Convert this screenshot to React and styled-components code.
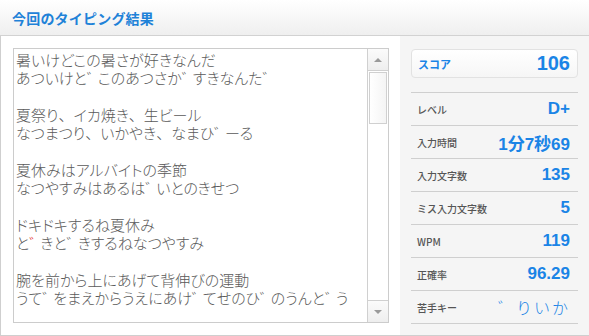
import React from 'react';
import styled, { createGlobalStyle } from 'styled-components';

const GlobalStyle = createGlobalStyle`
  html, body {
    margin: 0;
    padding: 0;
    background: #ffffff;
  }
  body {
    font-family: "Noto Sans CJK JP", "Liberation Sans", sans-serif;
  }
`;

// '*' marks a miss (shown red)
const lines = [
  '暑いけどこの暑さが好きなんだ',
  'あついけと゛このあつさか゛すきなんた゛',
  '',
  '夏祭り、イカ焼き、生ビール',
  'なつまつり、いかやき、なまひ゛ーる',
  '',
  '夏休みはアルバイトの季節',
  'なつやすみはあるは゛いとのきせつ',
  '',
  'ドキドキするね夏休み',
  'と*゛きと゛きするねなつやすみ',
  '',
  '腕を前から上にあげて背伸びの運動',
  'うて゛をまえからうえにあけ゛てせのひ゛のうんと゛う',
];

const stats = [
  { label: 'レベル', value: 'D+' },
  { label: '入力時間', value: '1分7秒69' },
  { label: '入力文字数', value: '135' },
  { label: 'ミス入力文字数', value: '5' },
  { label: 'WPM', value: '119' },
  { label: '正確率', value: '96.29' },
  { label: '苦手キー', value: '゛りいか', light: true },
];

const Page = styled.div`
  width: 589px;
  height: 336px;
  display: flex;
  flex-direction: column;
  box-sizing: border-box;
`;

const Header = styled.div`
  height: 35px;
  border-bottom: 1px solid #d2d2d2;
  background: linear-gradient(#ffffff, #efefef);
  display: flex;
  align-items: center;
  padding-left: 12px;
`;

const Title = styled.h1`
  margin: 0;
  font-size: 14px;
  font-weight: bold;
  color: #1f82d8;
  letter-spacing: 0.2px;
`;

const Body = styled.div`
  display: flex;
  height: 299px;
  border-bottom: 1px solid #cfcfcf;
`;

const LeftPane = styled.div`
  width: 400px;
  border-left: 1px solid #cfcfcf;
  background: #ffffff;
  box-sizing: border-box;
  padding: 12px 0 0 12px;
`;

const TextBox = styled.div`
  width: 376px;
  height: 275px;
  box-sizing: border-box;
  border: 1px solid #cccccc;
  display: flex;
`;

const TextContent = styled.div`
  flex: 1;
  padding: 2px 0 0 2px;
  font-size: 15px;
  line-height: 18.3px;
  color: #5a5a5a;
  white-space: pre;
  overflow: hidden;
  font-family: "Noto Sans CJK JP", sans-serif;
  font-weight: 300;
  font-feature-settings: "palt";
`;

const Line = styled.div`
  height: 18.3px;
`;

const Mark = styled.span`
  letter-spacing: -4px;
  color: ${(p) => (p.$miss ? '#e02020' : 'inherit')};
`;

const Comma = styled.span`
  font-feature-settings: normal;
`;

const ScrollBar = styled.div`
  width: 20px;
  border-left: 1px solid #d0d0d0;
  display: flex;
  flex-direction: column;
  background: #ffffff;
`;

const ScrollButton = styled.div`
  height: 21px;
  background: linear-gradient(#fbfbfb, #eeeeee);
  display: flex;
  align-items: center;
  justify-content: center;
  border-bottom: ${(p) => (p.$top ? '1px solid #d0d0d0' : 'none')};
  border-top: ${(p) => (p.$top ? 'none' : '1px solid #d0d0d0')};
  margin-top: ${(p) => (p.$top ? '0' : 'auto')};
`;

const Arrow = styled.div`
  width: 0;
  height: 0;
  border-left: 4px solid transparent;
  border-right: 4px solid transparent;
  ${(p) =>
    p.$up
      ? 'border-bottom: 4px solid #9a9a9a;'
      : 'border-top: 4px solid #9a9a9a;'}
`;

const Thumb = styled.div`
  margin: 1px 1px 0 1px;
  height: 50px;
  border: 1px solid #d0d0d0;
  background: linear-gradient(90deg, #ffffff, #f4f4f4);
`;

const RightPane = styled.div`
  flex: 1;
  background: #f5f5f5;
  padding: 13px 11px 0 11px;
  display: flex;
  flex-direction: column;
`;

const ScoreBox = styled.div`
  height: 29px;
  box-sizing: border-box;
  border: 1px solid #e2e2e2;
  border-radius: 4px;
  background: linear-gradient(#ffffff, #f6f6f6);
  display: flex;
  align-items: center;
  justify-content: space-between;
  padding: 0 7px 0 6px;
  margin-bottom: 14px;
`;

const ScoreLabel = styled.span`
  font-size: 11px;
  font-weight: bold;
  color: #1a84e6;
`;

const ScoreValue = styled.span`
  font-family: "Liberation Sans", Arial, sans-serif;
  font-size: 20px;
  font-weight: bold;
  color: #1a84e6;
`;

const StatList = styled.div`
  border-bottom: 1px solid #cfcfcf;
`;

const StatRow = styled.div`
  height: 32px;
  border-top: 1px solid #cfcfcf;
  display: flex;
  align-items: center;
  justify-content: space-between;
  padding: 0 8px 0 6px;
`;

const StatLabel = styled.span`
  font-size: 10px;
  font-weight: 500;
  color: #555555;
`;

const StatValue = styled.span`
  font-family: ${(p) =>
    p.$light ? '"Noto Sans CJK JP", sans-serif' : '"Liberation Sans", Arial, "Noto Sans CJK JP", sans-serif'};
  font-size: ${(p) => (p.$light ? '16px' : '17px')};
  font-weight: ${(p) => (p.$light ? 300 : 'bold')};
  letter-spacing: ${(p) => (p.$light ? '2px' : '0')};
  color: #1a84e6;
`;

function renderLine(text) {
  const out = [];
  let miss = false;
  [...text].forEach((ch, i) => {
    if (ch === '*') {
      miss = true;
      return;
    }
    if (ch === '゛') {
      out.push(
        <Mark key={i} $miss={miss}>
          {ch}
        </Mark>
      );
    } else if (ch === '、') {
      out.push(<Comma key={i}>{ch}</Comma>);
    } else {
      out.push(ch);
    }
    miss = false;
  });
  return out;
}

export default function App() {
  return (
    <Page>
      <GlobalStyle />
      <Header>
        <Title>今回のタイピング結果</Title>
      </Header>
      <Body>
        <LeftPane>
          <TextBox>
            <TextContent>
              {lines.map((l, i) => (
                <Line key={i}>{renderLine(l)}</Line>
              ))}
            </TextContent>
            <ScrollBar>
              <ScrollButton $top>
                <Arrow $up />
              </ScrollButton>
              <Thumb />
              <ScrollButton>
                <Arrow />
              </ScrollButton>
            </ScrollBar>
          </TextBox>
        </LeftPane>
        <RightPane>
          <ScoreBox>
            <ScoreLabel>スコア</ScoreLabel>
            <ScoreValue>106</ScoreValue>
          </ScoreBox>
          <StatList>
            {stats.map((s) => (
              <StatRow key={s.label}>
                <StatLabel>{s.label}</StatLabel>
                <StatValue $light={s.light}>{s.value}</StatValue>
              </StatRow>
            ))}
          </StatList>
        </RightPane>
      </Body>
    </Page>
  );
}
